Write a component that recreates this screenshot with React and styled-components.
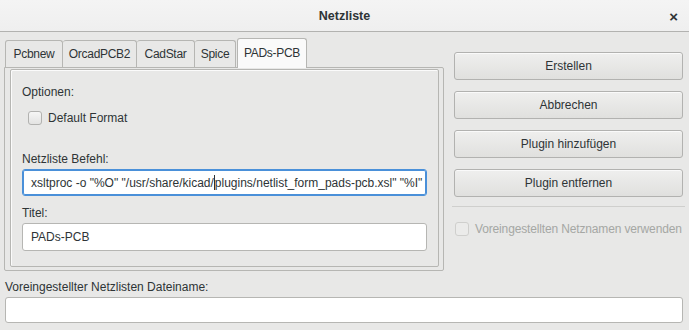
import React, { useState } from "react";
import styled, { createGlobalStyle } from "styled-components";

const GlobalStyle = createGlobalStyle`
  html, body {
    margin: 0;
    padding: 0;
    background: #e8e8e7;
    font-family: "Liberation Sans", "DejaVu Sans", sans-serif;
    font-size: 12px;
    color: #2e3436;
  }
`;

const Window = styled.div`
  width: 689px;
  height: 330px;
  background: #e8e8e7;
  overflow: hidden;
`;

const TitleBar = styled.div`
  height: 32px;
  box-sizing: border-box;
  border-bottom: 1px solid #b2b2b0;
  background: linear-gradient(#f4f4f4, #efefef);
  display: flex;
  align-items: center;
  justify-content: center;
  position: relative;
  font-weight: bold;
  font-size: 12.5px;
`;

const CloseButton = styled.span`
  position: absolute;
  right: 11px;
  top: 8px;
  font-size: 15px;
  font-weight: bold;
  color: #2e3436;
`;

const Body = styled.div`
  padding: 6px 6px 0 4px;
  display: flex;
  flex-direction: column;
`;

const TopRow = styled.div`
  display: flex;
  gap: 10px;
`;

const Notebook = styled.div`
  width: 440px;
  display: flex;
  flex-direction: column;
`;

const TabRow = styled.div`
  display: flex;
  height: 27px;
  align-items: flex-end;
  padding: 2px 0 0 1px;
`;

const Tab = styled.div`
  box-sizing: border-box;
  width: ${(p) => p.w}px;
  height: ${(p) => (p.active ? "30px" : "27px")};
  display: flex;
  align-items: center;
  justify-content: center;
  letter-spacing: -0.3px;
  border: 1px solid #b6b6b3;
  border-bottom: none;
  border-left: ${(p) => (p.first || p.active ? "1px solid #b6b6b3" : "none")};
  border-radius: 3px 3px 0 0;
  background: ${(p) => (p.active ? "#fafafa" : "#e8e8e7")};
  margin-left: ${(p) => (p.active ? "1px" : "0")};
  margin-bottom: ${(p) => (p.active ? "-1px" : "0")};
  padding-bottom: ${(p) => (p.active ? "2px" : "0")};
  position: relative;
  z-index: ${(p) => (p.active ? 1 : 0)};
`;

const Panel = styled.div`
  box-sizing: border-box;
  height: 204px;
  border: 1px solid #b6b6b3;
  border-radius: 0 2px 2px 2px;
  padding: 1px 4px 3px 5px;
  display: flex;
`;

const Frame = styled.div`
  flex: 1;
  min-width: 0;
  border: 1px solid #b6b6b3;
  box-shadow: inset 1px 1px 0 #fbfbfb;
  border-radius: 2px;
  padding: 14px 11px 0 11px;
  display: flex;
  flex-direction: column;
`;

const Label = styled.div`
  height: 16px;
  line-height: 16px;
  margin-top: ${(p) => p.mt || 0}px;
  white-space: nowrap;
`;

const CheckRow = styled.label`
  display: flex;
  align-items: center;
  gap: 6px;
  white-space: nowrap;
  margin: ${(p) => p.margin};
  color: ${(p) => (p.dim ? "#a5a7a4" : "#2e3436")};
  letter-spacing: ${(p) => (p.dim ? "-0.15px" : "0")};
`;

const Box = styled.span`
  flex: none;
  width: 14px;
  height: 14px;
  box-sizing: border-box;
  border: 1px solid ${(p) => (p.dim ? "#cfcfcd" : "#b2b2b0")};
  border-radius: 3px;
  background: ${(p) =>
    p.dim ? "#ebebea" : "linear-gradient(#f6f6f6, #e3e3e2)"};
`;

const Input = styled.div`
  box-sizing: border-box;
  height: ${(p) => p.h || 28}px;
  border: 1px solid ${(p) => (p.focused ? "#4a90d9" : "#b6b6b3")};
  box-shadow: ${(p) => (p.focused ? "inset 0 0 0 1px #4a90d9" : "none")};
  border-radius: 3px;
  background: #ffffff;
  padding: 0 8px;
  display: flex;
  align-items: center;
  white-space: pre;
  overflow: hidden;
  margin-top: ${(p) => p.mt || 0}px;
`;

const Caret = styled.span`
  flex: none;
  width: 1px;
  height: 15px;
  background: #2e3436;
`;

const Side = styled.div`
  width: 229px;
  padding-top: 14px;
  display: flex;
  flex-direction: column;
  gap: 11px;
`;

const Button = styled.div`
  box-sizing: border-box;
  height: 28px;
  border: 1px solid #b2b2b0;
  border-radius: 3px;
  background: linear-gradient(#efefee, #e0e0de);
  box-shadow: inset 0 1px 0 #fafafa;
  display: flex;
  align-items: center;
  justify-content: center;
`;

const Separator = styled.div`
  height: 1px;
  background: #cfcfcd;
  margin: -2px -2px 2px -2px;
`;

const Footer = styled.div`
  display: flex;
  flex-direction: column;
  padding: 8px 0 0 1px;
  width: 678px;
`;

export default function App() {
  const [active] = useState("PADs-PCB");
  const tabs = [
    { name: "Pcbnew", w: 58 },
    { name: "OrcadPCB2", w: 74 },
    { name: "CadStar", w: 58 },
    { name: "Spice", w: 41 },
    { name: "PADs-PCB", w: 70 },
  ];
  return (
    <Window>
      <GlobalStyle />
      <TitleBar>
        Netzliste
        <CloseButton>×</CloseButton>
      </TitleBar>
      <Body>
        <TopRow>
          <Notebook>
            <TabRow>
              {tabs.map((t, i) => (
                <Tab
                  key={t.name}
                  first={i === 0}
                  w={t.w}
                  active={t.name === active}
                >
                  {t.name}
                </Tab>
              ))}
            </TabRow>
            <Panel>
              <Frame>
                <Label>Optionen:</Label>
                <CheckRow margin="11px 0 0 6px">
                  <Box />
                  Default Format
                </CheckRow>
                <Label mt={26}>Netzliste Befehl:</Label>
                <Input focused h={27} mt={2}>
                  {'xsltproc -o "%O" "/usr/share/kicad/'}
                  <Caret />
                  {'plugins/netlist_form_pads-pcb.xsl" "%I"'}
                </Input>
                <Label mt={9}>Titel:</Label>
                <Input mt={2}>PADs-PCB</Input>
              </Frame>
            </Panel>
          </Notebook>
          <Side>
            <Button>Erstellen</Button>
            <Button>Abbrechen</Button>
            <Button>Plugin hinzufügen</Button>
            <Button>Plugin entfernen</Button>
            <Separator />
            <CheckRow dim margin="2px 0 0 1px">
              <Box dim />
              Voreingestellten Netznamen verwenden
            </CheckRow>
          </Side>
        </TopRow>
        <Footer>
          <Label>Voreingestellter Netzlisten Dateiname:</Label>
          <Input h={26} mt={2} />
        </Footer>
      </Body>
    </Window>
  );
}
